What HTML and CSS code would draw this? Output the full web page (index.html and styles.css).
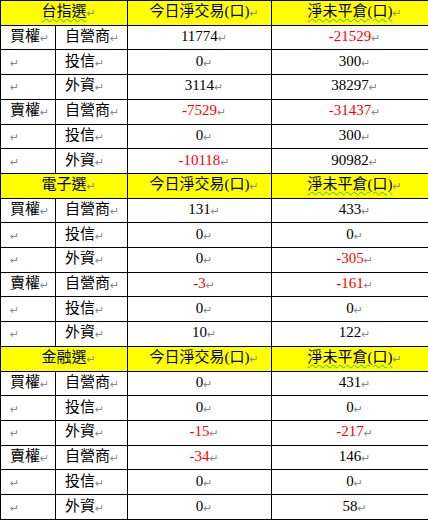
FILE: index.html
```html
<!DOCTYPE html>
<html>
<head>
<meta charset="utf-8">
<link rel="stylesheet" href="styles.css">
</head>
<body>
<table class="grid">
<colgroup><col class="c1"><col class="c2"><col class="c3"><col class="c4"></colgroup>
<tbody>
<tr class="head"><td colspan="2" class="ctr"><span class="wavy">台指選</span><i>↵</i></td><td class="ctr">今日淨交易(口)<i>↵</i></td><td class="ctr"><span class="wavy">淨未平倉(口)</span><i>↵</i></td></tr>
<tr><td>買權<i>↵</i></td><td>自營商<i>↵</i></td><td class="num">11774<i>↵</i></td><td class="num"><span class="neg">-21529</span><i>↵</i></td></tr>
<tr><td><i>↵</i></td><td>投信<i>↵</i></td><td class="num">0<i>↵</i></td><td class="num">300<i>↵</i></td></tr>
<tr><td><i>↵</i></td><td>外資<i>↵</i></td><td class="num">3114<i>↵</i></td><td class="num">38297<i>↵</i></td></tr>
<tr><td>賣權<i>↵</i></td><td>自營商<i>↵</i></td><td class="num"><span class="neg">-7529</span><i>↵</i></td><td class="num"><span class="neg">-31437</span><i>↵</i></td></tr>
<tr><td><i>↵</i></td><td>投信<i>↵</i></td><td class="num">0<i>↵</i></td><td class="num">300<i>↵</i></td></tr>
<tr><td><i>↵</i></td><td>外資<i>↵</i></td><td class="num"><span class="neg">-10118</span><i>↵</i></td><td class="num">90982<i>↵</i></td></tr>
<tr class="head"><td colspan="2" class="ctr">電子選<i>↵</i></td><td class="ctr">今日淨交易(口)<i>↵</i></td><td class="ctr"><span class="wavy">淨未平倉(口)</span><i>↵</i></td></tr>
<tr><td>買權<i>↵</i></td><td>自營商<i>↵</i></td><td class="num">131<i>↵</i></td><td class="num">433<i>↵</i></td></tr>
<tr><td><i>↵</i></td><td>投信<i>↵</i></td><td class="num">0<i>↵</i></td><td class="num">0<i>↵</i></td></tr>
<tr><td><i>↵</i></td><td>外資<i>↵</i></td><td class="num">0<i>↵</i></td><td class="num"><span class="neg">-305</span><i>↵</i></td></tr>
<tr><td>賣權<i>↵</i></td><td>自營商<i>↵</i></td><td class="num"><span class="neg">-3</span><i>↵</i></td><td class="num"><span class="neg">-161</span><i>↵</i></td></tr>
<tr><td><i>↵</i></td><td>投信<i>↵</i></td><td class="num">0<i>↵</i></td><td class="num">0<i>↵</i></td></tr>
<tr><td><i>↵</i></td><td>外資<i>↵</i></td><td class="num">10<i>↵</i></td><td class="num">122<i>↵</i></td></tr>
<tr class="head"><td colspan="2" class="ctr">金融選<i>↵</i></td><td class="ctr">今日淨交易(口)<i>↵</i></td><td class="ctr"><span class="wavy">淨未平倉(口)</span><i>↵</i></td></tr>
<tr><td>買權<i>↵</i></td><td>自營商<i>↵</i></td><td class="num">0<i>↵</i></td><td class="num">431<i>↵</i></td></tr>
<tr><td><i>↵</i></td><td>投信<i>↵</i></td><td class="num">0<i>↵</i></td><td class="num">0<i>↵</i></td></tr>
<tr><td><i>↵</i></td><td>外資<i>↵</i></td><td class="num"><span class="neg">-15</span><i>↵</i></td><td class="num"><span class="neg">-217</span><i>↵</i></td></tr>
<tr><td>賣權<i>↵</i></td><td>自營商<i>↵</i></td><td class="num"><span class="neg">-34</span><i>↵</i></td><td class="num">146<i>↵</i></td></tr>
<tr><td><i>↵</i></td><td>投信<i>↵</i></td><td class="num">0<i>↵</i></td><td class="num">0<i>↵</i></td></tr>
<tr><td><i>↵</i></td><td>外資<i>↵</i></td><td class="num">0<i>↵</i></td><td class="num">58<i>↵</i></td></tr>
</tbody>
</table>
</body>
</html>
```
FILE: styles.css
```css
html, body {
  margin: 0;
  padding: 0;
  background: #ffffff;
}
.grid {
  border-collapse: collapse;
  table-layout: fixed;
  width: 428px;
  height: 520px;
  font-family: "Liberation Serif", "Noto Sans CJK TC", serif;
  font-size: 15px;
  color: #000000;
}
.c1 { width: 55px; }
.c2 { width: 72px; }
.c3 { width: 144px; }
.c4 { width: 157px; }
.grid td {
  border: 1px solid #000000;
  padding: 0 0 0 9px;
  height: 23px;
  line-height: 18px;
  white-space: nowrap;
  overflow: hidden;
  vertical-align: middle;
}
.grid .ctr, .grid .num {
  text-align: center;
}
.head td {
  background: #ffff00;
}
.neg {
  color: #ff0000;
}
.wavy {
  text-decoration-line: underline;
  text-decoration-style: wavy;
  text-decoration-color: #33bb33;
  text-decoration-thickness: 1px;
  text-underline-offset: 2px;
}
.grid i {
  font-style: normal;
  font-family: "DejaVu Sans", sans-serif;
  font-size: 11px;
  color: #8a8a8a;
  vertical-align: -1px;
}
```
